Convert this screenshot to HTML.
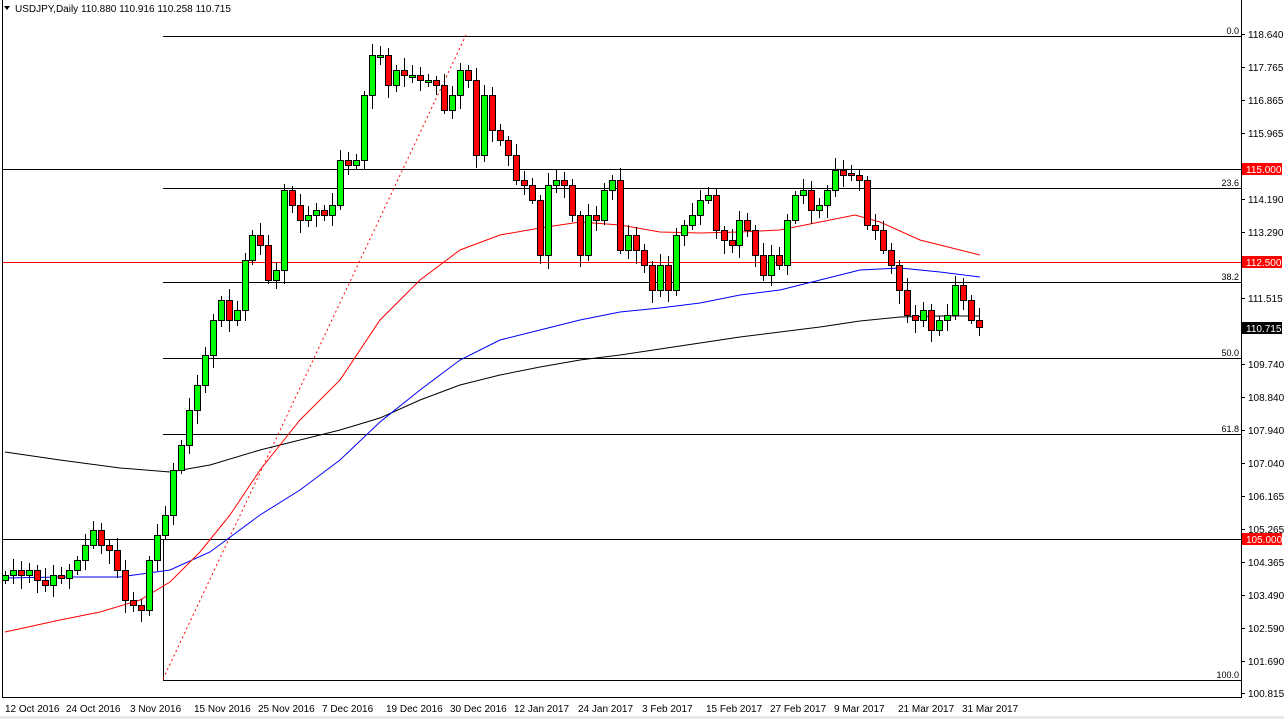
<!DOCTYPE html>
<html><head><meta charset="utf-8"><style>
html,body{margin:0;padding:0;background:#fff;overflow:hidden}
svg{display:block;font-family:"Liberation Sans",sans-serif;font-size:10px}
</style></head><body>
<svg id="s" width="1284" height="719" xmlns="http://www.w3.org/2000/svg">
<rect x="0" y="716" width="1284" height="3" fill="#e8e8e8"/>
<line x1="2.5" y1="0" x2="2.5" y2="697" stroke="#000"/>
<line x1="2" y1="697.5" x2="1241" y2="697.5" stroke="#000"/>
<line x1="1241.5" y1="0" x2="1241.5" y2="698" stroke="#000"/>
<line x1="3" y1="169.5" x2="1241" y2="169.5" stroke="#000"/>
<line x1="3" y1="262.5" x2="1241" y2="262.5" stroke="#f00"/>
<line x1="3" y1="539.5" x2="1241" y2="539.5" stroke="#000"/>
<g stroke="#000">
<line x1="163" y1="36.5" x2="1241" y2="36.5"/>
<line x1="163" y1="188.5" x2="1241" y2="188.5"/>
<line x1="163" y1="282.5" x2="1241" y2="282.5"/>
<line x1="163" y1="358.5" x2="1241" y2="358.5"/>
<line x1="163" y1="434.5" x2="1241" y2="434.5"/>
<line x1="163" y1="680.5" x2="1241" y2="680.5"/>
<line x1="163.5" y1="540" x2="163.5" y2="680"/>
</g>
<line x1="163" y1="679" x2="466" y2="35" stroke="#f00" stroke-dasharray="2,3"/>
<g font-size="9" text-anchor="end" fill="#000">
<text x="1239" y="34">0.0</text><text x="1239" y="186">23.6</text><text x="1239" y="280">38.2</text>
<text x="1239" y="356">50.0</text><text x="1239" y="432">61.8</text><text x="1239" y="678">100.0</text>
</g>
<g fill="none" stroke-width="1">
<polyline stroke="#000" points="5,452 60,460 120,468 170,472 210,465 260,450 300,440 340,430 380,418 420,400 460,385 500,375 540,367 580,360 620,355 660,349 700,343 740,337 780,332 820,327 860,321 900,317 940,316 980,316"/>
<polyline stroke="#00f" points="5,578 60,577 120,577 170,570 210,552 260,515 300,490 340,460 380,422 420,390 460,360 500,340 540,330 580,320 620,312 660,308 700,303 740,295 780,290 820,280 860,270 900,268 940,272 980,277"/>
<polyline stroke="#f00" points="5,632 60,620 100,612 140,600 170,582 200,552 230,515 260,470 300,420 340,380 380,320 420,280 460,250 500,235 540,228 580,222 620,225 660,232 700,233 740,232 780,230 820,222 855,215 880,222 920,240 960,250 980,255"/>
</g>
<g id="c"></g>
<g id="ax" font-size="10"></g>
<g font-size="10">
<text x="5" y="712">12 Oct 2016</text><text x="66" y="712">24 Oct 2016</text><text x="130" y="712">3 Nov 2016</text>
<text x="194" y="712">15 Nov 2016</text><text x="258" y="712">25 Nov 2016</text><text x="322" y="712">7 Dec 2016</text>
<text x="386" y="712">19 Dec 2016</text><text x="450" y="712">30 Dec 2016</text><text x="514" y="712">12 Jan 2017</text>
<text x="578" y="712">24 Jan 2017</text><text x="642" y="712">3 Feb 2017</text><text x="706" y="712">15 Feb 2017</text>
<text x="770" y="712">27 Feb 2017</text><text x="834" y="712">9 Mar 2017</text><text x="898" y="712">21 Mar 2017</text>
<text x="962" y="712">31 Mar 2017</text>
</g>
<path d="M4 6 L10 6 L7 10 Z" fill="#000"/>
<text x="15" y="12" font-size="10">USDJPY,Daily  110.880 110.916 110.258 110.715</text>
</svg>
<script>
(function(){
var ns="http://www.w3.org/2000/svg";
function el(t,a,p){var e=document.createElementNS(ns,t);for(var k in a)e.setAttribute(k,a[k]);p.appendChild(e);return e;}
var cl=[575,570,575,570,580,585,575,578,570,560,545,530,545,550,570,600,605,610,560,535,515,470,445,410,385,355,320,300,320,310,260,235,245,280,270,190,205,220,215,210,215,205,160,165,160,95,55,55,85,70,75,75,80,80,85,110,95,70,80,155,95,130,140,155,180,185,200,255,185,180,185,215,255,215,220,190,180,250,235,250,265,290,265,290,235,225,215,200,195,230,240,245,220,230,255,275,255,265,220,195,190,210,205,190,170,175,175,180,225,230,250,265,290,315,320,310,330,320,315,285,300,320,327];
var g=document.getElementById('c');var prev=580;var n=cl.length;var sp=(979-5)/(n-1);
for(var i=0;i<n;i++){
 var x=Math.round(5+i*sp),o=prev,c=cl[i];
 if(Math.abs(o-c)<2){o=c+(i%2?2:-2);}
 var tp=Math.min(o,c),bt=Math.max(o,c);
 var hi=tp-4-((i*7)%9),lo=bt+4+((i*5)%11);
 el('line',{x1:x+0.5,y1:hi,x2:x+0.5,y2:lo,stroke:'#000'},g);
 el('rect',{x:x-2.5,y:tp+0.5,width:6,height:bt-tp,fill:c<o?'#0f0':'#f00',stroke:'#000'},g);
 prev=cl[i];
}
var ax=document.getElementById('ax');
var L=[[118.640,34],[117.765,67],[116.865,100],[115.965,133],[114.190,199],[113.290,232],[111.515,298],[109.740,364],[108.840,397],[107.940,430],[107.040,463],[106.165,496],[105.265,529],[104.365,562],[103.490,595],[102.590,628],[101.690,661],[100.815,693]];
L.forEach(function(a){el('line',{x1:1241,y1:a[1]+.5,x2:1245,y2:a[1]+.5,stroke:'#000'},ax);var t=el('text',{x:1248,y:a[1]+4},ax);t.textContent=a[0].toFixed(3);});
[[115.000,169,'#f00'],[112.500,262,'#f00'],[105.000,539,'#f00'],[110.715,328,'#000']].forEach(function(a){
 el('rect',{x:1242,y:a[1]-6,width:40,height:12,fill:a[2]},ax);
 var t=el('text',{x:1246,y:a[1]+4,fill:'#fff'},ax);t.textContent=a[0].toFixed(3);});
})();
</script>
</body></html>
